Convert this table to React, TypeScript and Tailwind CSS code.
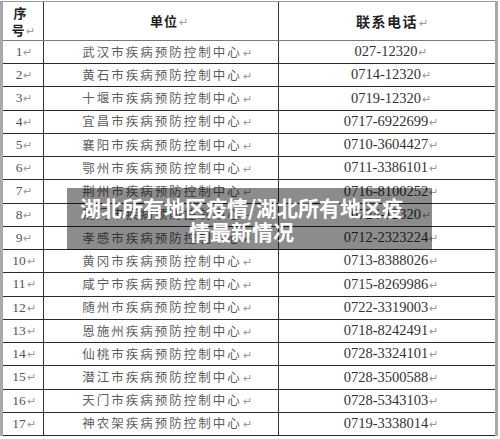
import React from "react";

const rows: [string, string, string][] = [
  ["1", "武汉市", "027-12320"],
  ["2", "黄石市", "0714-12320"],
  ["3", "十堰市", "0719-12320"],
  ["4", "宜昌市", "0717-6922699"],
  ["5", "襄阳市", "0710-3604427"],
  ["6", "鄂州市", "0711-3386101"],
  ["7", "荆州市", "0716-8100252"],
  ["8", "荆门市", "0724-12320"],
  ["9", "孝感市", "0712-2323224"],
  ["10", "黄冈市", "0713-8388026"],
  ["11", "咸宁市", "0715-8269986"],
  ["12", "随州市", "0722-3319003"],
  ["13", "恩施州", "0718-8242491"],
  ["14", "仙桃市", "0728-3324101"],
  ["15", "潜江市", "0728-3500588"],
  ["16", "天门市", "0728-5343103"],
  ["17", "神农架", "0719-3338014"],
];

const serif = { fontFamily: '"Liberation Serif", "Noto Sans CJK SC", serif' };
const cjk = { fontFamily: '"Noto Sans CJK SC", sans-serif' };

function Ret() {
  return <span className="text-[#9a9a9a] text-[11px] ml-[1px] font-normal tracking-normal" style={cjk}>↵</span>;
}

export default function App() {
  return (
    <div className="relative w-[500px] h-[439px] bg-white overflow-hidden">
      <div className="pt-[1px] w-[498px]">
        <div className="border-l-[3px] border-r-[3px] border-[#a9a9a9] border-t-[1px] border-t-[#9a9a9a]">
          <div className="flex h-[39px] border-b border-[#7a7a7a]">
            <div className="w-[41px] border-r border-[#333] flex flex-col items-center justify-center text-[13px] leading-[17px] text-[#222] font-bold" style={cjk}>
              <span className="mr-[6px]">序</span>
              <span>号<Ret /></span>
            </div>
            <div className="w-[235px] border-r border-[#333] flex items-center justify-center text-[13px] font-bold text-[#222] tracking-[1px]" style={cjk}>
              <span className="ml-[16px]">单位<Ret /></span>
            </div>
            <div className="flex-1 flex items-center justify-center text-[14px] font-bold text-[#222] tracking-[1.5px]" style={cjk}>
              <span className="ml-[10px]">联系电话<Ret /></span>
            </div>
          </div>
          {rows.map(([n, city, tel]) => (
            <div key={n} className="flex h-[23.24px] border-b border-[#2a2a2a]">
              <div className="w-[41px] border-r border-[#333] flex items-center justify-center text-[13.5px] text-[#555]" style={serif}>
                <span className="ml-[2px]">{n}<Ret /></span>
              </div>
              <div className="w-[235px] border-r border-[#333] flex items-center justify-center text-[12.5px] text-[#5e5e5e] tracking-[2px]" style={cjk}>
                <span className="ml-[12px]">{city}疾病预防控制中心<Ret /></span>
              </div>
              <div className="flex-1 flex items-center justify-center text-[14.5px] text-[#333]" style={serif}>
                <span className="ml-[8px]">{tel}<Ret /></span>
              </div>
            </div>
          ))}
        </div>
      </div>
      <div className="absolute left-[67px] top-[188px] w-[365px] h-[62px] bg-black/45 pl-[8px] pr-[24px] pt-[7px]">
        <div className="text-white font-bold text-[21px] leading-[24px] text-center" style={cjk}>
          湖北所有地区疫情/湖北所有地区疫情最新情况
        </div>
      </div>
    </div>
  );
}
